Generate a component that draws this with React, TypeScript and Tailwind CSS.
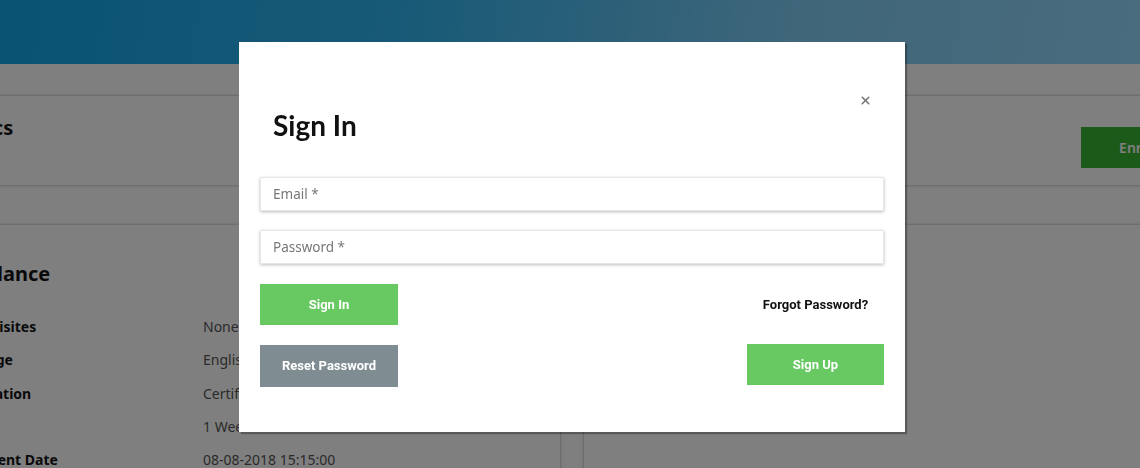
import { X } from "lucide-react"

const details = [
  { label: "Prerequisites", value: "None" },
  { label: "Language", value: "English" },
  { label: "Certification", value: "Certificate of Completion" },
  { label: "Period", value: "1 Week" },
  { label: "Enrollment Date", value: "08-08-2018 15:15:00" },
]

function CoursePage() {
  return (
    <div className="min-h-[468px] bg-white font-['Noto_Sans',sans-serif] text-[#141414]">
      <div className="h-[64px] bg-[linear-gradient(100deg,#14a6e6_0%,#2fb4ee_35%,#80cdf4_70%,#94d8fc_100%)]" />
      <div className="ml-[-84px] w-[1339px]">
        <div className="mt-8 flex h-[89px] justify-between bg-white px-6 shadow-[0_0_3px_rgba(0,0,0,0.35)]">
          <h2 className="pt-5 text-[20px] font-bold leading-[24px]">Physics</h2>
          <div className="pt-[31px]">
            <button className="h-[41px] w-[150px] bg-[#38b434] text-[14px] font-semibold text-white">
              Enroll Now
            </button>
          </div>
        </div>

        <div className="mt-10 grid grid-cols-[644px_1fr] gap-6">
          <div className="h-[300px] bg-white pl-[28px] pr-6 pt-[35px] shadow-[0_0_3px_rgba(0,0,0,0.35)]">
            <h3 className="-ml-[6px] text-[20px] font-bold leading-[28px]">Ambulance</h3>
            <div className="mt-[22px] grid grid-cols-[259px_1fr]">
              {details.map((d) => (
                <div key={d.label} className="contents">
                  <div className="text-[14px] font-bold leading-[33.3px]">{d.label}</div>
                  <div className="text-[14px] leading-[33.3px] text-[#555]">{d.value}</div>
                </div>
              ))}
            </div>
          </div>
          <div className="h-[300px] bg-white shadow-[0_0_3px_rgba(0,0,0,0.35)]" />
        </div>
      </div>
    </div>
  )
}

function SignInModal() {
  return (
    <div className="fixed inset-0 flex items-start justify-center bg-black/50 pt-[42px]">
      <div className="relative ml-[4px] w-[666px] bg-white px-[21px] pb-[45px] pt-[66px] font-['Noto_Sans',sans-serif] shadow-[2px_2px_1px_rgba(0,0,0,0.3)]">
        <button className="absolute right-[33px] top-[52px] text-[#777]" aria-label="Close">
          <X className="h-[13px] w-[13px]" strokeWidth={3} />
        </button>
        <h2 className="pl-[13px] font-['Lato',sans-serif] text-[28px] font-bold leading-[34px] text-[#111]">
          Sign In
        </h2>

        <div className="mt-[35px] flex flex-col gap-[19px]">
          <input
            placeholder="Email *"
            className="h-[34px] border border-[#e6e6e6] px-[12px] text-[13.5px] text-[#333] shadow-[0_1px_3px_rgba(0,0,0,0.25)] outline-none placeholder:text-[#777]"
          />
          <input
            type="password"
            placeholder="Password *"
            className="h-[34px] border border-[#e6e6e6] px-[12px] text-[13.5px] text-[#333] shadow-[0_1px_3px_rgba(0,0,0,0.25)] outline-none placeholder:text-[#777]"
          />
        </div>

        <div className="mt-[20px] flex items-center justify-between font-['Roboto',sans-serif]">
          <button className="h-[41px] w-[138px] bg-[#68c962] text-[13px] font-bold text-white">
            Sign In
          </button>
          <div className="w-[137px] text-center text-[13px] font-bold text-[#111]">
            Forgot Password?
          </div>
        </div>

        <div className="mt-[20px] flex items-start justify-between font-['Roboto',sans-serif]">
          <button className="h-[42px] w-[138px] bg-[#7f8c92] text-[13px] font-bold text-white">
            Reset Password
          </button>
          <button className="-mt-px h-[41px] w-[137px] bg-[#68c962] text-[13px] font-bold text-white">
            Sign Up
          </button>
        </div>
      </div>
    </div>
  )
}

export default function App() {
  return (
    <div className="relative h-[468px] overflow-hidden">
      <CoursePage />
      <SignInModal />
    </div>
  )
}
